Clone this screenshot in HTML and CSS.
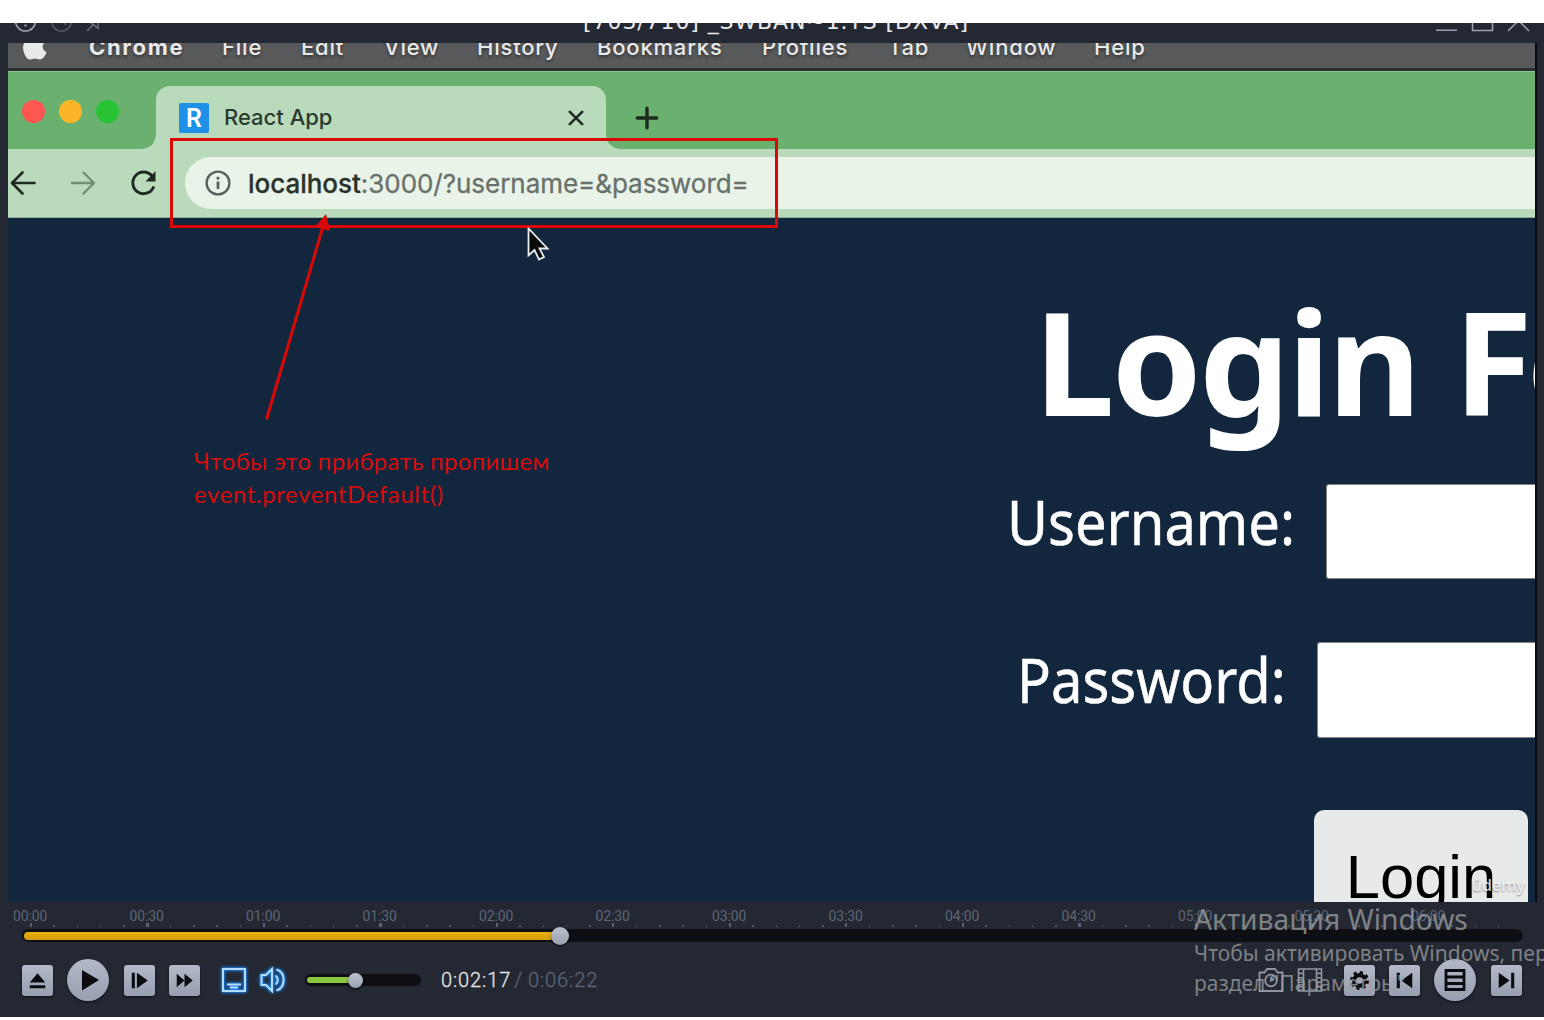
FILE: index.html
```html
<!DOCTYPE html>
<html lang="ru">
<head>
<meta charset="utf-8">
<title>Video player</title>
<link rel="stylesheet" href="styles.css">
</head>
<body>
<div class="player">
  <header class="titlebar">
    <svg class="title-icons" width="110" height="20" viewBox="0 0 110 20" fill="none" stroke-width="1.6">
      <circle cx="25.5" cy="-2" r="10" stroke="#9aa1b0"/><path d="M25.500-3v2M25.500 1.500v2" stroke="#9aa1b0" stroke-width="2"/>
      <circle cx="61.5" cy="-2" r="10" stroke="#4f5869"/><path d="M61 -3l5 5" stroke="#4f5869"/>
      <path d="M87 8l7-7M91 0l8 6M98-4v10" stroke="#646d7e"/>
    </svg>
    <span class="title-text">[703/710] _SWBAN~1.TS [DXVA]</span>
    <svg class="window-icons" width="110" height="20" viewBox="0 0 110 20" fill="none" stroke="#9aa2b4" stroke-width="1.5">
      <path d="M2 7.200h21"/><path d="M38.500-10v17.500h20V-10"/><path d="M74 8l20-20M95 8L75-12"/>
    </svg>
  </header>

  <main class="video">
    <nav class="menubar">
      <svg class="apple" width="26" height="17" viewBox="0 0 26 17"><path fill="#e9e9e9" d="M2 0h20c-2 3-2 7 2.500 9-1 4-4 7.500-7 7.500-2 0-2.500-1-4.500-1s-3 1-5 1C4.500 16.500 1 10 1 4z"/></svg>
      <b>Chrome</b><span>File</span><span>Edit</span><span>View</span><span>History</span><span>Bookmarks</span><span>Profiles</span><span>Tab</span><span>Window</span><span>Help</span>
    </nav>

    <div class="tabstrip">
      <div class="lights"><i class="red"></i><i class="yellow"></i><i class="green"></i></div>
      <div class="tab">
        <span class="favicon">R</span>
        <span class="tab-title">React App</span>
        <svg class="tab-close" width="16" height="16" viewBox="0 0 16 16" stroke="#222b25" stroke-width="2.6" stroke-linecap="round"><path d="M1.800 1.800l12.400 12.400M14.200 1.800L1.800 14.200"/></svg>
      </div>
      <svg class="new-tab" width="24" height="24" viewBox="0 0 24 24" stroke="#1d2a20" stroke-width="3.4" stroke-linecap="round"><path d="M12 2.300v19.400M2.300 12h19.400"/></svg>
    </div>

    <div class="toolbar">
      <svg width="26" height="26" viewBox="0 0 26 26" fill="none" stroke="#1f2a23" stroke-width="2.7" stroke-linecap="round" stroke-linejoin="round"><path d="M24.500 13H2.500M12.500 2.500L2 13l10.500 10.500"/></svg>
      <svg class="forward" width="26" height="26" viewBox="0 0 26 26" fill="none" stroke="#71907a" stroke-width="2.400" stroke-linecap="round" stroke-linejoin="round"><path d="M2 13h22M13.500 2.500L24 13 13.500 23.500"/></svg>
      <svg class="reload" width="28" height="28" viewBox="0 0 28 28" fill="none" stroke="#1f2a23" stroke-width="2.9"><path d="M23.800 17.500A10.800 10.800 0 1 1 22 7"/><path d="M25.500 2v10.500H15.500z" fill="#1f2a23" stroke="none"/></svg>
      <div class="address">
        <svg width="26" height="26" viewBox="0 0 26 26" fill="none" stroke="#58615b" stroke-width="2.4"><circle cx="13" cy="13" r="11.400"/><path d="M13 11.500V19" stroke-width="2.800"/><path d="M13 6.800v2.800" stroke-width="2.800"/></svg>
        <span class="url"><b>localhost</b><span>:3000/?username=&amp;password=</span></span>
      </div>
    </div>

    <section class="page">
      <h1>Login F<span>o</span></h1>
      <div class="row username"><label><span>Username:</span></label><div class="field"></div></div>
      <div class="row password"><label><span>Password:</span></label><div class="field"></div></div>
      <div class="login-button">Login</div>
    </section>

    <span class="udemy">ûdemy</span>
  </main>

  <footer class="controls">
    <div class="scale">
      <span>00:00</span><span>00:30</span><span>01:00</span><span>01:30</span><span>02:00</span><span>02:30</span><span>03:00</span><span>03:30</span><span>04:00</span><span>04:30</span><span>05:00</span><span>05:30</span><span>06:00</span>
    </div>
    <div class="seek"><div class="seek-fill"></div><i class="knob"></i></div>
    <div class="buttons">
      <div class="btn eject"><svg viewBox="0 0 30 30"><path d="M15 8l7.500 9H7.500zM7.500 19.500h15v3h-15z"/></svg></div>
      <div class="btn round play"><svg viewBox="0 0 42 42"><path d="M15 11l17 10-17 10.500z"/></svg></div>
      <div class="btn step"><svg viewBox="0 0 30 30"><path d="M7.500 7.500h3v15h-3zM12.500 7.500L23 15l-10.500 7.500z"/></svg></div>
      <div class="btn fast"><svg viewBox="0 0 30 30"><path d="M7.500 8.500l7.500 6.500-7.500 6.500zM15 8.500l8 6.500-8 6.500z"/></svg></div>
      <svg class="glow subtitle" width="26" height="26" viewBox="0 0 26 26" fill="none" stroke="#b4dcff" stroke-width="2"><path d="M2 2h22v22H2zM6 17.500h14M9 20.500h8"/></svg>
      <svg class="glow speaker" width="28" height="28" viewBox="0 0 28 28" fill="none" stroke="#b4dcff" stroke-width="2"><path d="M2.500 9h4.500l6-6v22l-6-6H2.500zM16.500 9.500c3 2 3 7 0 9M17.500 3.500c9.500 3 9.500 18 0 21"/></svg>
      <div class="volume"><div class="volume-fill"></div><i class="knob"></i></div>
      <div class="time"><span>0:02:17</span><em class="slash">/</em><em>0:06:22</em></div>
      <div class="right">
        <svg class="camera" width="26" height="26" viewBox="0 0 26 26" fill="none" stroke="#8f96a4" stroke-width="1.800"><path d="M1.500 5.500h5l2.500-3.500h8l2.500 3.500h5v18.500h-23z"/><circle cx="13" cy="13.500" r="5.800"/><path d="M13 9.500v4l3-1.500"/></svg>
        <svg class="film" width="26" height="26" viewBox="0 0 26 26" fill="none" stroke="#8f96a4" stroke-width="1.600"><path d="M1.500 2h23v22h-23zM6.500 2v22M19.500 2v22M1.500 6.400h5M1.500 10.800h5M1.500 15.200h5M1.500 19.600h5M19.500 6.400h5M19.500 10.800h5M19.500 15.200h5M19.500 19.600h5"/></svg>
        <div class="btn gear"><svg viewBox="0 0 30 30"><circle cx="15" cy="15" r="5.200" fill="none" stroke="#0b0c0f" stroke-width="4"/><circle cx="15" cy="15" r="7.700" fill="none" stroke="#0b0c0f" stroke-width="3" stroke-dasharray="3 3.050"/></svg></div>
        <div class="btn prev"><svg viewBox="0 0 30 30"><path d="M7.500 7.500h3v15h-3zM22.500 7.500v15L12 15z"/></svg></div>
        <div class="btn round list"><svg viewBox="0 0 42 42"><path fill="none" stroke="#0b0c0f" stroke-width="2.800" d="M12 11.500h18v19H12zM12 18h18M12 24.500h18"/></svg></div>
        <div class="btn next"><svg viewBox="0 0 30 30"><path d="M7.500 7.500L18 15 7.500 22.500zM19.500 7.500h3v15h-3z"/></svg></div>
      </div>
    </div>
  </footer>
</div>

<div class="activation"><strong>Активация Windows</strong><span>Чтобы активировать Windows, пер</span><span>раздел "Параметры"</span></div>

<div class="highlight"></div>
<svg class="arrow" width="80" height="210" viewBox="0 0 80 210"><path d="M6.500 205.500L62.500 14" stroke="#dc0808" stroke-width="3"/><path d="M66 0l4 17-15-4z" fill="#dc0808"/></svg>
<p class="note"><span>Чтобы это прибрать пропишем</span><br><span class="code">event.preventDefault()</span></p>
<svg class="cursor" width="24" height="36" viewBox="0 0 24 36"><path d="M1.500 1.500v27l6-5.500 4.500 9.500 5-2.500-4.500-8.500h8z" fill="#0a0a0a" stroke="#e9edf0" stroke-width="1.800"/></svg>
</body>
</html>
```
FILE: styles.css
```css
* { box-sizing: border-box; }
body { margin: 0; background: #fff; width: 1544px; height: 1020px; overflow: hidden; position: relative; font-family: "Noto Sans", sans-serif; }
svg { display: block; flex: none; }

.player { margin-top: 23px; height: 994px; background: #242832; display: flex; flex-direction: column; }
.titlebar { height: 20px; overflow: hidden; display: flex; justify-content: space-between; flex: none; }
.title-text { margin: -11px 0 0 8px; font: 22px/20px "DejaVu Sans", sans-serif; letter-spacing: .9px; color: #e9eaec; white-space: nowrap; }

.video { height: 859px; margin: 0 7px 0 8px; border-right: 2px solid #06080b; overflow: hidden; position: relative; flex: none; }
.menubar { height: 28px; background: #58595b; border-bottom: 3px solid #2a2d2e; overflow: hidden; display: grid; grid-template-columns: 81px 133px 79px 83px 93px 120px 165px 126px 78px 128px 80px; font: 500 22px/8px Inter, sans-serif; letter-spacing: .8px; color: #e9e9e9; text-shadow: 0 2px 3px #333; white-space: nowrap; }
.menubar b { font-weight: 700; letter-spacing: 1.700px; }
.apple { margin-left: 14px; }

.tabstrip { height: 78px; background: #6ab170; border-top: 1px solid #8cc791; display: flex; }
.lights { display: flex; gap: 14.200px; padding: 28px 0 0 13.500px; width: 148px; }
.lights i { width: 23px; height: 23px; border-radius: 50%; }
.red { background: #fd5750; }
.yellow { background: #fcb428; }
.green { background: #27c335; }
.tab { position: relative; width: 450px; height: 63px; margin-top: 14px; border-radius: 14px 14px 0 0; background: #b9dabb; display: flex; padding-left: 23px; }
.tab::before, .tab::after { content: ""; position: absolute; bottom: 0; width: 14px; height: 14px; }
.tab::before { left: -14px; background: radial-gradient(circle at 0 0, transparent 13.500px, #b9dabb 14px); }
.tab::after { right: -14px; background: radial-gradient(circle at 100% 0, transparent 13.500px, #b9dabb 14px); }
.favicon { width: 30px; height: 30px; margin-top: 17px; border-radius: 2px; background: #1f90e8; color: #fff; font: 600 25px/31px Roboto, sans-serif; text-align: center; }
.tab-title { margin: 17px 0 0 15px; width: 343px; font: 500 22px/28px Inter, sans-serif; color: #2b3a30; }
.tab-close { margin-top: 24px; margin-left: 1px; }
.new-tab { margin: 34px 0 0 29px; }

.toolbar { height: 69px; background: #b9dabb; border-bottom: 1px solid #8fae97; display: flex; padding: 8px 0 0 2px; }
.toolbar > svg { margin-top: 13px; }
.toolbar .forward { margin-left: 34px; }
.toolbar .reload { margin: 12px 0 0 34px; }
.address { flex: 1; margin-left: 27px; height: 52px; border-radius: 26px 0 0 26px; background: #e9f3e8; display: flex; padding-left: 20px; }
.address svg { margin-top: 13px; }
.url { margin-left: 17px; font: 400 26px/54px Inter, sans-serif; color: #68716b; white-space: nowrap; letter-spacing: -.03px; -webkit-text-stroke: .3px; }
.url b { font-weight: 500; color: #29332c; }

.page { height: 684px; background: #12273d; overflow: hidden; display: flex; flex-direction: column; color: #fff; }
h1 { margin: 70px 0 0 1026px; font: 700 144px/144px "Noto Sans", sans-serif; letter-spacing: -2.700px; white-space: nowrap; flex: none; }
h1 span { margin-left: -3px; }
.row { display: flex; flex: none; }
.row label { font: 62px/75px "Noto Sans", sans-serif; white-space: nowrap; flex: none; -webkit-text-stroke: .5px #fff; }
.row label span { display: inline-block; transform: scaleX(.905); transform-origin: 0 0; }
.field { flex: 1; background: #fff; border: 1px solid #84857f; border-right: 0; border-radius: 3px 0 0 3px; }
.username { margin: 52px 0 0 999px; height: 95px; }
.username label { width: 319px; }
.password { margin: 63px 0 0 1009px; height: 96px; }
.password label { width: 300px; }
.login-button { margin: 72px 0 0 1306px; width: 214px; height: 140px; flex: none; border-radius: 10px; background: #e8e9e9; color: #000; font: 61.500px/133px "Liberation Sans", sans-serif; text-align: center; }
.udemy { position: absolute; right: 10px; bottom: 6px; font: 600 16px/22px "Open Sans", sans-serif; color: rgba(255,255,255,.8); text-shadow: 0 1px 2px rgba(0,0,0,.4); }

.scale { height: 27px; margin-left: 13px; width: 1520px; display: flex; font: 14px/28px Roboto, sans-serif; letter-spacing: -.1px; color: #5d6677;
  background:
    repeating-linear-gradient(90deg, #596273 0 2px, transparent 2px 116.500px) 17px 21px / 1487px 4px no-repeat,
    repeating-linear-gradient(90deg, #4c5564 0 1.500px, transparent 1.500px 23.300px) 17px 23px / 1487px 2px no-repeat; }
.scale span { width: 116.500px; flex: none; }
.seek { position: relative; height: 13px; margin: 0 21px 0 22px; border-radius: 7px; background: #0e0f12; padding: 3px 2px; }
.seek-fill { width: 533px; height: 8px; border-radius: 4px 0 0 4px; background: linear-gradient(#edb10c, #d39b12); }
.knob { position: absolute; border-radius: 50%; background: linear-gradient(#bcc2cf, #98a0b0); box-shadow: 0 1px 2px #000; }
.seek .knob { left: 529px; top: -2.500px; width: 18px; height: 18px; }
.buttons { height: 42px; margin: 17px 0 0 22px; display: flex; align-items: center; }
.btn { width: 31px; height: 31px; flex: none; border-radius: 3px; background: linear-gradient(#b3b9c8, #979fb0); box-shadow: 0 1px 2px #0c0e12; fill: #0b0c0f; }
.btn.round { width: 42px; height: 42px; border-radius: 50%; }
.play { margin-left: 14px; }
.step { margin-left: 15px; }
.fast { margin-left: 14px; }
.glow { filter: drop-shadow(0 0 1.500px #1683f0) drop-shadow(0 0 1px #1683f0); }
.subtitle { margin-left: 21px; }
.speaker { margin-left: 12px; }
.volume { position: relative; margin-left: 18px; width: 116px; height: 12px; border-radius: 6px; background: #0e0f12; padding: 3px 2px; }
.volume-fill { width: 42px; height: 6px; border-radius: 3px 0 0 3px; background: #8ac640; }
.volume .knob { left: 43px; top: -1.500px; width: 15px; height: 15px; }
.time { display: flex; margin-left: 20px; font: 300 20px/20px Roboto, sans-serif; letter-spacing: .9px; color: #e4e5e7; -webkit-text-stroke: .3px; }
.time em { font-style: normal; color: #5b6475; }
.time .slash { margin: 0 5px 0 3px; }
.right { margin-left: auto; margin-right: 22px; display: flex; align-items: center; }
.film { margin-left: 13px; }
.gear { margin-left: 21px; }
.prev { margin-left: 14px; }
.list { margin-left: 14px; }
.next { margin-left: 15px; }

.activation { position: absolute; left: 1194px; top: 900px; width: 350px; overflow: hidden; color: rgba(158,160,163,.75); font: 21px/30px "Noto Sans", sans-serif; white-space: nowrap; display: flex; flex-direction: column; align-items: flex-start; }
.activation strong { font-weight: 400; font-size: 28.200px; line-height: 38px; }

.highlight { position: absolute; left: 170px; top: 137.500px; width: 608px; height: 90px; border: 3px solid #dc0808; }
.arrow { position: absolute; left: 260px; top: 214px; }
.note { position: absolute; left: 194px; top: 444px; margin: 0; font: 24px/33px Lato, sans-serif; color: #d80c0c; white-space: nowrap; letter-spacing: .3px; }
.note .code { letter-spacing: .6px; }
.cursor { position: absolute; left: 527px; top: 227px; }
```
